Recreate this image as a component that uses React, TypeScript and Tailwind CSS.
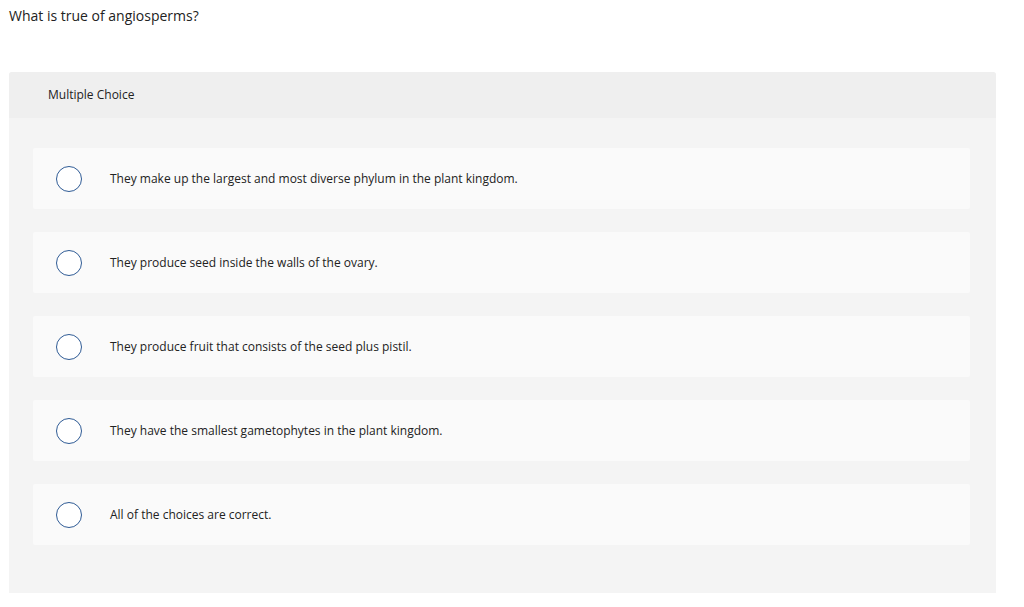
const choices = [
  "They make up the largest and most diverse phylum in the plant kingdom.",
  "They produce seed inside the walls of the ovary.",
  "They produce fruit that consists of the seed plus pistil.",
  "They have the smallest gametophytes in the plant kingdom.",
  "All of the choices are correct.",
];

export default function App() {
  return (
    <div className="min-h-[607px] bg-white text-[#222] font-['Open_Sans','Liberation_Sans',sans-serif]">
      <p className="pl-[9px] pt-[6px] text-[14px] leading-[20px]">What is true of angiosperms?</p>

      <div className="ml-[9px] mt-[46px] w-[987px] rounded-t-[3px] bg-[#f4f4f4] pb-[48px]">
        <div className="flex h-[46px] items-center rounded-t-[3px] bg-[#efefef] pl-[39px] text-[12px]">
          Multiple Choice
        </div>

        <div className="flex flex-col gap-[23px] pl-[24px] pr-[26px] pt-[30px]">
          {choices.map((text) => (
            <div key={text} className="flex h-[61px] items-center rounded-[2px] bg-[#fafafa]">
              <span className="ml-[23px] h-[26px] w-[26px] shrink-0 rounded-full border border-[#2f5b95] bg-white" />
              <span className="ml-[28px] text-[12px]">{text}</span>
            </div>
          ))}
        </div>
      </div>
    </div>
  );
}
